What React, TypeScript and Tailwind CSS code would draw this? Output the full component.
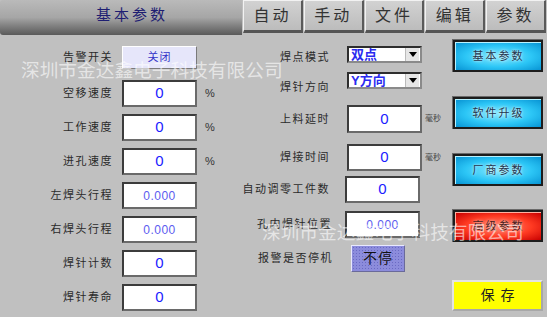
import React from 'react';

const font = "font-['Liberation_Sans','Noto_Sans_CJK_SC',sans-serif]";

const Label: React.FC<{ text: string; className?: string }> = ({ text, className = '' }) => (
  <div className={`text-right text-[11px] leading-[13px] tracking-[1.5px] text-[#2a2a2a] ${className}`}>{text}</div>
);

const ValueBox: React.FC<{ value: string; small?: boolean; className?: string }> = ({ value, small, className = '' }) => (
  <div
    className={`w-[75px] h-[27px] bg-white border-2 border-t-[#3c3c3c] border-l-[#3c3c3c] border-r-[#6a6a6a] border-b-[#6a6a6a] flex items-center justify-center ${
      small ? 'text-[12px] text-[#5c5cf0] tracking-[0.5px]' : 'text-[15px] text-[#1c1cff]'
    } ${className}`}
  >
    {value}
  </div>
);

const Select: React.FC<{ value: string }> = ({ value }) => (
  <div className="ml-[17px] w-[75px] h-[17px] bg-white border-2 border-t-[#2e2e2e] border-l-[#2e2e2e] border-r-[#8a8a8a] border-b-[#8a8a8a] flex items-center">
    <span className="flex-1 pl-[2px] text-[13px] leading-[13px] font-bold text-[#2a2af0]">{value}</span>
    <span className="w-[14px] h-[13px] mr-[1px] bg-[#e6e6e6] border-l border-[#bbb] flex items-center justify-center">
      <svg width="8" height="5" viewBox="0 0 8 5">
        <path d="M0 0h8L4 5z" fill="#000" />
      </svg>
    </span>
  </div>
);

const SideButton: React.FC<{ text: string; red?: boolean; className?: string }> = ({ text, red, className = '' }) => (
  <div
    className={`w-[91px] h-[33px] p-[2px] bg-[#1c1c1c] border-t border-l border-[#6a6a6a] ${className}`}
  >
    <div
      className={`w-full h-full flex items-center justify-center text-[11px] tracking-[2px] border-t border-l ${
        red
          ? 'border-[#ffb0a0] bg-[radial-gradient(ellipse_at_center,#ff8a78_0%,#ff3a22_55%,#c80000_100%)] text-[#4a2020] [text-shadow:0_0_3px_#ffd0c0]'
          : 'border-[#b8f2ff] bg-[radial-gradient(ellipse_at_center,#8aeaff_0%,#2cc6f6_55%,#0894d4_100%)] text-[#24344e] [text-shadow:0_0_3px_#ffffff]'
      }`}
    >
      {text}
    </div>
  </div>
);

const Tab: React.FC<{ text: string }> = ({ text }) => (
  <div className="flex-1 h-[33px] mr-[1px] bg-linear-to-b from-[#d2d2d2] to-[#bcbcbc] border-t border-l border-t-[#f2f2f2] border-l-[#f2f2f2] border-r-2 border-r-[#5a5a5a] border-b-[3px] border-b-[#555] flex items-center justify-center text-[16px] tracking-[3px] text-[#333]">
    {text}
  </div>
);

export default function App() {
  const leftRows: { label: string; value: string; small?: boolean; pct?: boolean }[] = [
    { label: '空移速度', value: '0', pct: true },
    { label: '工作速度', value: '0', pct: true },
    { label: '进孔速度', value: '0', pct: true },
    { label: '左焊头行程', value: '0.000', small: true },
    { label: '右焊头行程', value: '0.000', small: true },
    { label: '焊针计数', value: '0' },
    { label: '焊针寿命', value: '0' },
  ];

  return (
    <div className={`relative w-[547px] h-[317px] overflow-hidden bg-[#c0c0c0] ${font}`}>
      {/* top bar */}
      <div className="flex h-[35px]">
        <div className="w-[242px] h-[35px] rounded-l-[3px] bg-linear-to-b from-[#bababa] via-[#a6a6a6] via-50% to-[#5a5a5a] flex items-center justify-center text-[15px] tracking-[3px] text-[#1e1e72] pl-[22px] pb-[4px]">
          基本参数
        </div>
        <div className="flex flex-1 ml-[1px]">
          <Tab text="自动" />
          <Tab text="手动" />
          <Tab text="文件" />
          <Tab text="编辑" />
          <Tab text="参数" />
        </div>
      </div>

      <div className="flex">
        {/* left column */}
        <div className="w-[240px] pt-[11px] flex flex-col">
          <div className="flex items-center h-[23px] mb-[11px]">
            <Label text="告警开关" className="w-[113px]" />
            <div className="ml-[9px] w-[75px] h-[23px] bg-[#e6e6fa] border border-t-white border-l-white border-r-[#7a7a7a] border-b-[#7a7a7a] flex items-center justify-center text-[11px] tracking-[1px] text-[#3434c8]">
              关闭
            </div>
          </div>
          {leftRows.map((r) => (
            <div key={r.label} className="flex items-center h-[27px] mb-[7px]">
              <Label text={r.label} className="w-[113px]" />
              <ValueBox value={r.value} small={r.small} className="ml-[9px]" />
              {r.pct && <span className="ml-[8px] text-[11px] text-[#333]">%</span>}
            </div>
          ))}
        </div>

        {/* middle column */}
        <div className="w-[212px] pt-[11px] flex flex-col">
          <div className="flex items-start h-[17px]">
            <Label text="焊点模式" className="w-[90px] mt-[5px]" />
            <Select value="双点" />
          </div>
          <div className="flex items-start h-[17px] mt-[9px]">
            <Label text="焊针方向" className="w-[90px] mt-[9px]" />
            <Select value="Y方向" />
          </div>
          <div className="flex items-center h-[28px] mt-[16px]">
            <Label text="上料延时" className="w-[90px]" />
            <ValueBox value="0" className="ml-[17px] h-[28px]" />
            <span className="ml-[3px] text-[8px] text-[#444]">毫秒</span>
          </div>
          <div className="flex items-center h-[27px] mt-[11px]">
            <Label text="焊接时间" className="w-[90px]" />
            <ValueBox value="0" className="ml-[17px]" />
            <span className="ml-[3px] text-[8px] text-[#444]">毫秒</span>
          </div>
          <div className="flex items-center h-[27px] mt-[5px]">
            <Label text="自动调零工件数" className="w-[90px] whitespace-nowrap" />
            <ValueBox value="0" className="ml-[15px]" />
          </div>
          <div className="flex items-center h-[27px] mt-[8px]">
            <Label text="孔内焊针位置" className="w-[92px] whitespace-nowrap" />
            <ValueBox value="0.000" small className="ml-[13px]" />
          </div>
          <div className="flex items-center h-[27px] mt-[7px]">
            <Label text="报警是否停机" className="w-[93px] whitespace-nowrap" />
            <div className="ml-[18px] w-[54px] h-[27px] bg-[#8c8cdc] bg-[radial-gradient(#6a6ac4_0.8px,transparent_1px)] bg-[length:3px_3px] border border-t-[#e8e8ff] border-l-[#e8e8ff] border-r-[#6a6a9a] border-b-[#6a6a9a] flex items-center justify-center text-[14px] tracking-[1px] text-[#111]">
              不停
            </div>
          </div>
        </div>

        {/* right column */}
        <div className="pt-[4px] flex flex-col">
          <SideButton text="基本参数" />
          <SideButton text="软件升级" className="mt-[24px] h-[32px]" />
          <SideButton text="厂商参数" className="mt-[24px] h-[32px]" />
          <SideButton text="高级参数" red className="mt-[23px]" />
          <div className="mt-[38px] w-[91px] h-[31px] bg-[#ffff00] border-2 border-t-[#e4e4e4] border-l-[#e4e4e4] border-r-[#a8a8a8] border-b-[#a8a8a8] flex items-center justify-center text-[14px] tracking-[6px] pl-[6px] text-[#222]">
            保存
          </div>
        </div>
      </div>

      {/* watermarks */}
      <div className="absolute left-[21px] top-[61px] text-[18.7px] leading-[20px] text-white/60 whitespace-nowrap pointer-events-none">
        深圳市金达鑫电子科技有限公司
      </div>
      <div className="absolute left-[262px] top-[223px] text-[18.7px] leading-[20px] text-white/60 whitespace-nowrap pointer-events-none">
        深圳市金达鑫电子科技有限公司
      </div>
    </div>
  );
}
